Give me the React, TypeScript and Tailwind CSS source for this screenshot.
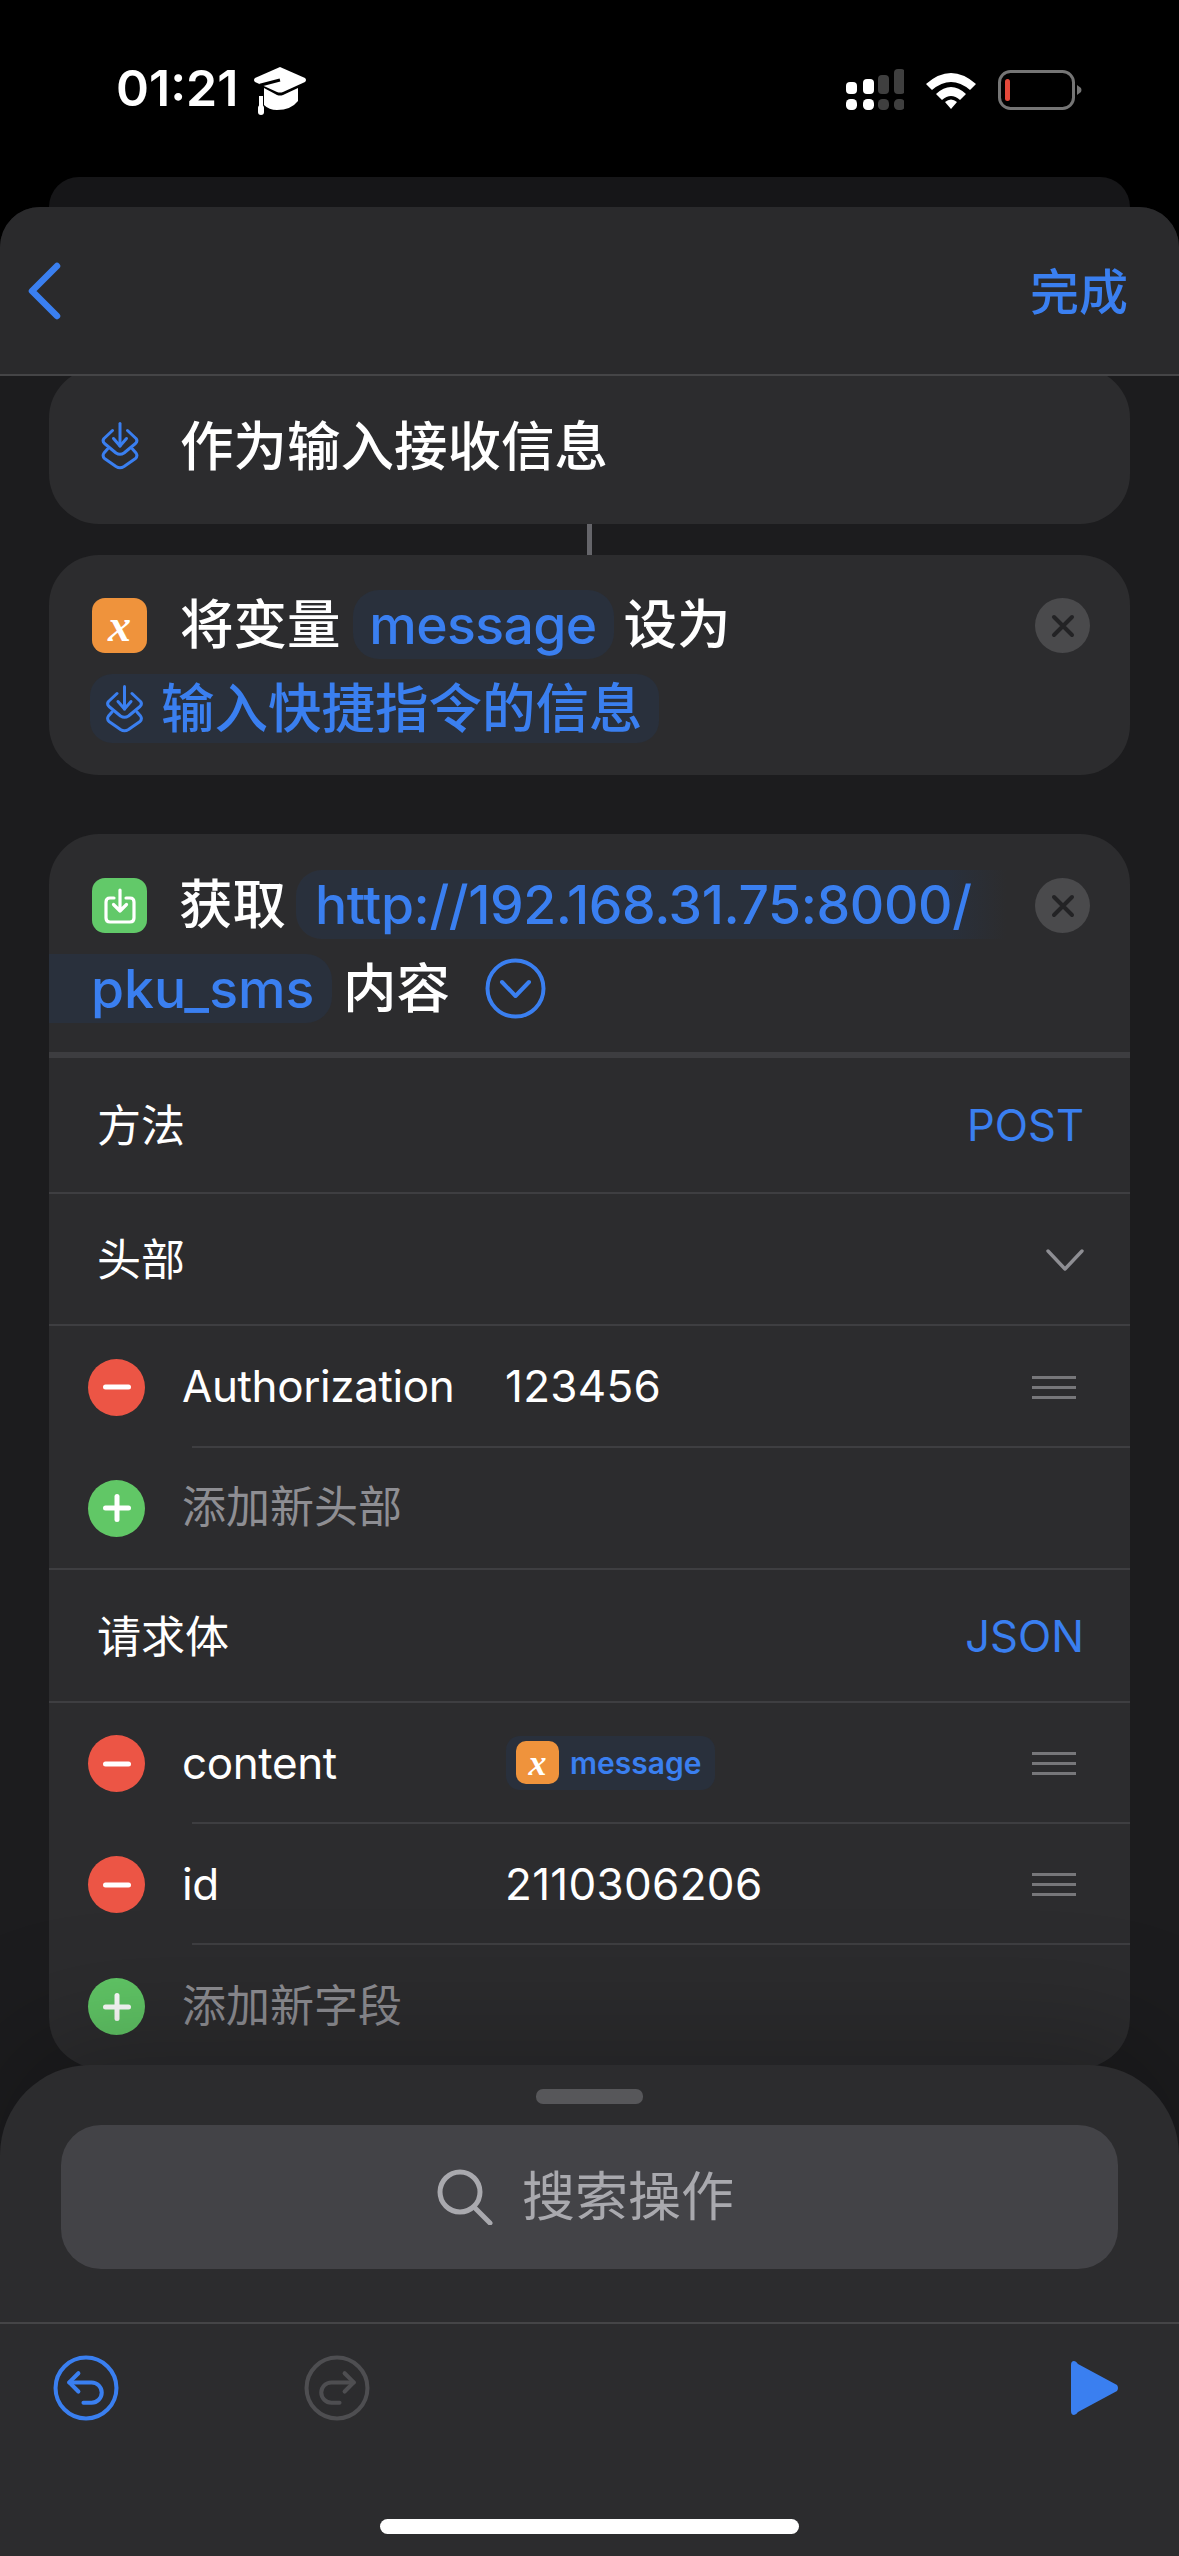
import type { ReactNode } from 'react'

const BLUE = '#3a7ff0'

function CapIcon() {
  return (
    <svg width="56" height="50" viewBox="0 0 54 50" className="ml-[14px] mt-[6px]">
      <path d="M27 1 L52 12 Q54 14 52 16 L30 26 Q27 27 24 26 L2 16 Q0 14 2 12 Z" fill="white" />
      <path d="M27 14 L8 19 V30" fill="none" stroke="black" strokeWidth="3" />
      <path d="M11 22 L24 29 Q27 30 30 29 L45 22 V35 Q38 44 24 44 Q16 44 11 39 Z" fill="white" />
      <rect x="6" y="30" width="4" height="10" fill="white" />
      <rect x="5" y="39" width="6" height="10" rx="3" fill="white" />
    </svg>
  )
}

function SignalIcon() {
  return (
    <svg width="58" height="42" viewBox="0 0 58 42">
      <rect x="0" y="13" width="11" height="12" rx="4" fill="white" />
      <rect x="17" y="10" width="11" height="15" rx="4" fill="white" />
      <rect x="32" y="6" width="11" height="19" rx="4" fill="#3f3f3f" />
      <rect x="48" y="0" width="11" height="25" rx="4" fill="#3f3f3f" />
      <rect x="0" y="30" width="11" height="11" rx="4.5" fill="white" />
      <rect x="17" y="30" width="11" height="11" rx="4.5" fill="white" />
      <rect x="32" y="30" width="11" height="11" rx="4.5" fill="#3f3f3f" />
      <rect x="48" y="30" width="11" height="11" rx="4.5" fill="#3f3f3f" />
    </svg>
  )
}

function WifiIcon() {
  return (
    <svg width="50" height="38" viewBox="0 0 50 38">
      <path d="M0 13 Q25 -9 50 13 L44 19 Q25 3 6 19 Z" fill="white" />
      <path d="M10 23 Q25 9 40 23 L34 29 Q25 21 16 29 Z" fill="white" />
      <path d="M19 31 Q25 26 31 31 L25 38 Z" fill="white" />
    </svg>
  )
}

function BatteryIcon() {
  return (
    <svg width="84" height="40" viewBox="0 0 84 40">
      <rect x="1.5" y="1.5" width="74" height="37" rx="11" fill="none" stroke="#757575" strokeWidth="3" />
      <rect x="7" y="9" width="5" height="22" rx="2.5" fill="#e5483a" />
      <path d="M79 15 L83 18 Q84 20 83 22 L79 25 Z" fill="#757575" />
    </svg>
  )
}

function ReceiveIcon({ className }: { className?: string }) {
  return (
    <svg width="38" height="48" viewBox="0 0 38 48" fill="none" stroke={BLUE} strokeWidth="3" strokeLinecap="round" strokeLinejoin="round" className={className}>
      <path d="M19 1.5 V24" />
      <path d="M12.5 16.5 L19 24 L25.5 16.5" />
      <path d="M11.5 8.5 L3 16.5 Q1 19 3.5 21.5 L15 31 Q19 33.5 23 31 L34.5 21.5 Q37 19 35 16.5 L26.5 8.5" />
      <path d="M6.5 27 L3 31 Q1 34 3.5 36.5 L15 44.5 Q19 47 23 44.5 L34.5 36.5 Q37 34 35 31 L31.5 27" />
    </svg>
  )
}

function Tile({ color, children, size = 'w-[55px] h-[55px] rounded-[13px]' }: { color: string; children: ReactNode; size?: string }) {
  return (
    <div className={`${size} ${color} shrink-0 flex items-center justify-center`}>{children}</div>
  )
}

function VarX({ className }: { className: string }) {
  return <span className={`font-['Liberation_Serif',serif] italic font-bold text-white leading-none ${className}`}>x</span>
}

function CloseButton() {
  return (
    <div className="w-[55px] h-[55px] rounded-full bg-[#4a4a4c] flex items-center justify-center shrink-0">
      <svg width="24" height="24" viewBox="0 0 24 24" stroke="#232325" strokeWidth="4" strokeLinecap="round">
        <path d="M3 3 L21 21 M21 3 L3 21" />
      </svg>
    </div>
  )
}

function Pill({ children, className = '' }: { children: ReactNode; className?: string }) {
  return (
    <div className={`h-[69px] flex items-center text-[#3a7ff0] ${className}`}>{children}</div>
  )
}

function RoundBadge({ kind }: { kind: 'minus' | 'plus' }) {
  return (
    <div className={`w-[57px] h-[57px] rounded-full flex items-center justify-center shrink-0 ${kind === 'minus' ? 'bg-[#ec5545]' : 'bg-[#61c766]'}`}>
      <svg width="30" height="30" viewBox="0 0 30 30" stroke="white" strokeWidth="5" strokeLinecap="round">
        <path d="M3.5 15 H26.5" />
        {kind === 'plus' && <path d="M15 3.5 V26.5" />}
      </svg>
    </div>
  )
}

function Handle() {
  return (
    <div className="flex flex-col gap-[7px] w-[44px] shrink-0">
      <div className="h-[3px] bg-[#77777a]" />
      <div className="h-[3px] bg-[#77777a]" />
      <div className="h-[3px] bg-[#77777a]" />
    </div>
  )
}

function SettingRow({ label, children, height }: { label: string; children: ReactNode; height: string }) {
  return (
    <div className={`${height} border-b-2 border-[#3e3e41] pl-[48px] pr-[46px] pt-[2px] flex items-center justify-between`}>
      <span className="text-[44px] leading-none text-white">{label}</span>
      {children}
    </div>
  )
}

function FieldRow({ name, value, height }: { name: string; value: ReactNode; height: string }) {
  return (
    <div className={`${height} pl-[39px] pr-[54px] flex items-center relative`}>
      <RoundBadge kind="minus" />
      <span className="ml-[37px] w-[323px] pb-[2px] text-[44px] leading-none tracking-[-0.4px] text-white">{name}</span>
      <div className="flex-1 pb-[2px] text-[44px] leading-none tracking-[0.3px] text-white">{value}</div>
      <Handle />
      <div className="absolute left-[143px] right-0 bottom-0 h-[2px] bg-[#3e3e41]" />
    </div>
  )
}

function AddRow({ label, height, className = '' }: { label: string; height: string; className?: string }) {
  return (
    <div className={`${height} pl-[39px] flex items-center ${className}`}>
      <RoundBadge kind="plus" />
      <span className="ml-[37px] pb-[2px] text-[44px] leading-none text-[#8e8e93]">{label}</span>
    </div>
  )
}

function HistoryIcon({ color, flip }: { color: string; flip?: boolean }) {
  return (
    <svg width="66" height="66" viewBox="0 0 65 65" fill="none" stroke={color} strokeWidth="4" strokeLinecap="round" strokeLinejoin="round" className={flip ? '-scale-x-100' : ''}>
      <circle cx="32.5" cy="32.5" r="30" />
      <path d="M25 18 L16 27 L25 36" />
      <path d="M16 27 H38 A10 10 0 0 1 38 47 H30" />
    </svg>
  )
}

export default function App() {
  return (
    <div lang="zh-CN" className="w-[1179px] h-[2556px] overflow-hidden bg-black flex flex-col font-[Inter,'Noto_Sans_CJK_SC',sans-serif]">
      {/* Status bar */}
      <div className="h-[177px] pl-[116px] pr-[97px] pb-[67px] flex items-end justify-between">
        <div className="flex items-start h-[50px]">
          <span className="text-[50px] mt-[3px] leading-[50px] font-semibold text-white">01:21</span>
          <CapIcon />
        </div>
        <div className="flex items-center gap-[22px] h-[40px]">
          <SignalIcon />
          <WifiIcon />
          <BatteryIcon />
        </div>
      </div>
      <div className="h-[30px] mx-[49px] rounded-t-[30px] bg-[#161618]" />

      {/* Editor sheet */}
      <div className="flex-1 rounded-t-[40px] bg-[#1c1c1e] flex flex-col min-h-0">
        <div className="relative z-10 h-[169px] rounded-t-[40px] bg-[#2a2a2c] border-b-2 border-[#454547] pl-[27px] pr-[51px] flex items-center justify-between">
          <svg width="34" height="58" viewBox="0 0 34 58" fill="none" stroke={BLUE} strokeWidth="6.5" strokeLinecap="round" strokeLinejoin="round">
            <path d="M30 4 L5 29 L30 54" />
          </svg>
          <span className="mt-[3px] text-[49px] leading-none font-medium text-[#3a7ff0]">完成</span>
        </div>

        {/* Receive card */}
        <div className="-mt-[8px] mx-[49px] h-[156px] rounded-[50px] bg-[#2c2c2e] pl-[52px] flex items-center">
          <ReceiveIcon />
          <span className="ml-[41px] pt-[2px] text-[53.5px] leading-none font-medium text-white">作为输入接收信息</span>
        </div>
        <div className="w-[5px] h-[31px] mx-auto bg-[#65656a]" />

        {/* Set variable card */}
        <div className="mx-[49px] h-[220px] rounded-[50px] bg-[#2c2c2e] pt-[35px] pl-[41px] pr-[40px] flex flex-col gap-[15px]">
          <div className="flex items-center text-[53.5px] leading-none font-medium text-white">
            <Tile color="bg-[#ef933c] ml-[2px] mt-[2px]"><VarX className="text-[46px]" /></Tile>
            <span className="ml-[33px]">将变量</span>
            <Pill className="ml-[12px] w-[261px] rounded-[26px] justify-center tracking-[-0.6px] bg-[#29303c]">message</Pill>
            <span className="ml-[10px]">设为</span>
            <div className="ml-auto mt-[2px]"><CloseButton /></div>
          </div>
          <Pill className="w-[569px] rounded-[22px] text-[53.5px] leading-none font-medium bg-[#29303c]">
            <ReceiveIcon className="ml-[15px] w-[39px]" />
            <span className="ml-[17px]">输入快捷指令的信息</span>
          </Pill>
        </div>

        {/* Get contents card */}
        <div className="mt-[59px] mx-[49px] h-[1234px] rounded-[50px] bg-[#2c2c2e] overflow-hidden flex flex-col shrink-0">
          <div className="h-[218px] pt-[36px] flex flex-col gap-[15px] text-[53.5px] leading-none font-medium text-white">
            <div className="pl-[43px] pr-[40px] flex items-center">
              <Tile color="bg-[#62c969] mt-[2px]">
                <svg width="32" height="36" viewBox="0 0 32 36" fill="none" stroke="white" strokeWidth="3.2" strokeLinecap="round" strokeLinejoin="round">
                  <path d="M10 10 H6 Q2 10 2 14 V30 Q2 34 6 34 H26 Q30 34 30 30 V14 Q30 10 26 10 H22" />
                  <path d="M16 2 V23 M9.5 16.5 L16 23 L22.5 16.5" />
                </svg>
              </Tile>
              <span className="ml-[32px]">获取</span>
              <Pill className="ml-[10px] w-[710px] rounded-l-[26px] pl-[19px] tracking-[-0.4px] bg-linear-to-r from-[#29303c] via-[#29303c] via-[92%] to-[#2c2c2e]">http://192.168.31.75:8000/</Pill>
              <div className="ml-auto mt-[2px]"><CloseButton /></div>
            </div>
            <div className="flex items-center">
              <Pill className="w-[283px] rounded-r-[26px] pl-[42px] bg-[#29303c]">pku_sms</Pill>
              <span className="ml-[11px]">内容</span>
              <svg width="61" height="61" viewBox="0 0 61 61" fill="none" stroke={BLUE} strokeWidth="4" strokeLinecap="round" strokeLinejoin="round" className="ml-[35px]">
                <circle cx="30.5" cy="30.5" r="28" />
                <path d="M17 24 L30.5 38 L44 24" />
              </svg>
            </div>
          </div>
          <div className="h-[6px] bg-[#3d3d40] shrink-0" />

          <SettingRow label="方法" height="h-[136px]">
            <span className="text-[43.5px] leading-none text-[#3a7ff0]">POST</span>
          </SettingRow>
          <SettingRow label="头部" height="h-[132px]">
            <svg width="38" height="22" viewBox="0 0 38 22" fill="none" stroke="#8e8e93" strokeWidth="3.4" strokeLinecap="round" strokeLinejoin="round">
              <path d="M2 2 L19 20 L36 2" />
            </svg>
          </SettingRow>
          <FieldRow name="Authorization" value="123456" height="h-[122px]" />
          <div className="border-b-2 border-[#3e3e41]">
            <AddRow label="添加新头部" height="h-[120px]" />
          </div>
          <SettingRow label="请求体" height="h-[133px]">
            <span className="text-[43.5px] leading-none text-[#3a7ff0]">JSON</span>
          </SettingRow>
          <FieldRow
            name="content"
            height="h-[121px]"
            value={
              <div className="ml-[1px] w-[209px] h-[54px] rounded-[14px] bg-[#29303c] flex items-center pl-[10px] tracking-normal">
                <Tile color="bg-[#ef933c]" size="w-[43px] h-[43px] rounded-[10px]"><VarX className="text-[36px]" /></Tile>
                <span className="ml-[11px] text-[30px] leading-none font-semibold text-[#3a7ff0]">message</span>
              </div>
            }
          />
          <FieldRow name="id" value="2110306206" height="h-[121px]" />
          <AddRow label="添加新字段" height="h-[123px]" />
        </div>

        {/* Action search sheet */}
        <div className="-mt-[3px] relative z-10 flex-1 rounded-t-[90px] bg-[#2c2c2e] shadow-[0_-30px_120px_rgba(0,0,0,0.25)] flex flex-col items-center">
          <div className="mt-[24px] w-[107px] h-[15px] rounded-[7px] bg-[#57575a]" />
          <div className="mt-[21px] w-[1057px] h-[144px] rounded-[40px] bg-[#434347] pr-[8px] flex items-center justify-center gap-[29px]">
            <svg width="56" height="56" viewBox="0 0 56 56" fill="none" stroke="#a9a9ae" strokeWidth="5" strokeLinecap="round">
              <circle cx="23" cy="23" r="20" />
              <path d="M37 38 L53 54" />
            </svg>
            <span className="text-[53px] leading-none text-[#a9a9ae]">搜索操作</span>
          </div>
          <div className="mt-[53px] w-full border-t-2 border-[#454547] pt-[31px] pl-[53px] pr-[60px] flex items-center">
            <HistoryIcon color={BLUE} />
            <div className="ml-[185px]">
              <HistoryIcon color="#4e4e51" flip />
            </div>
            <svg width="48" height="54" viewBox="0 0 48 54" className="ml-auto">
              <path d="M3 0 Q0 0 0 4 V50 Q0 54 3 54 Q5 54 7 51 L46 30 Q48 27 46 24 L7 3 Q5 0 3 0 Z" fill={BLUE} />
            </svg>
          </div>
          <div className="mt-[98px] w-[419px] h-[15px] rounded-full bg-white" />
        </div>
      </div>
    </div>
  )
}
